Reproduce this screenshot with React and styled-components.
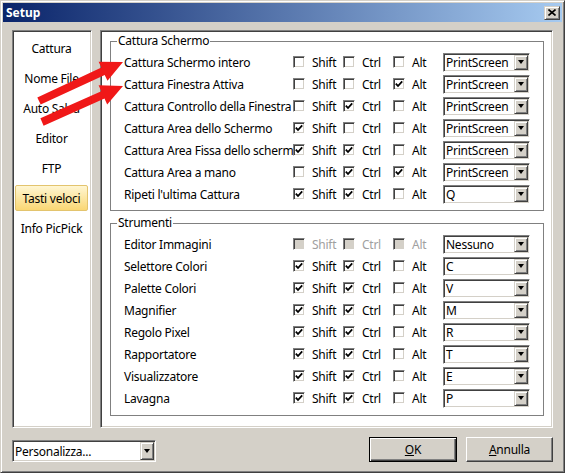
import React from "react";
import styled, { createGlobalStyle, css } from "styled-components";

const GlobalStyle = createGlobalStyle`
  html, body {
    margin: 0;
    padding: 0;
    background: #d4d0c8;
  }
  body {
    font-family: "Noto Sans", Tahoma, sans-serif;
    font-size: 12px;
    letter-spacing: -0.25px;
    color: #000;
  }
  * {
    box-sizing: border-box;
  }
`;

const sunken = css`
  border: 1px solid;
  border-color: #808080 #fff #fff #808080;
  box-shadow: inset 1px 1px #404040, inset -1px -1px #d4d0c8;
`;

const raised = css`
  border: 1px solid;
  border-color: #d4d0c8 #404040 #404040 #d4d0c8;
  box-shadow: inset 1px 1px #fff, inset -1px -1px #808080;
`;

const Window = styled.div`
  position: relative;
  width: 565px;
  height: 473px;
  background: #d4d0c8;
  border: 1px solid;
  border-color: #d4d0c8 #404040 #404040 #d4d0c8;
  box-shadow: inset 1px 1px #fff, inset -1px -1px #808080;
  padding: 2px;
  display: flex;
  flex-direction: column;
`;

const TitleBar = styled.div`
  flex: none;
  height: 19px;
  display: flex;
  align-items: center;
  justify-content: space-between;
  padding: 0 2px 0 3px;
  background: linear-gradient(to right, #0a246a, #a6caf0);
`;

const Title = styled.span`
  color: #fff;
  font-weight: bold;
  font-size: 12px;
  letter-spacing: 0;
`;

const CloseButton = styled.div`
  width: 16px;
  height: 14px;
  background: #d4d0c8;
  ${raised};
  display: flex;
  align-items: center;
  justify-content: center;
`;

const Body = styled.div`
  flex: none;
  display: grid;
  grid-template-columns: 80px 453px;
  column-gap: 8px;
  padding: 8px 9px 0;
  height: 406px;
`;

const NavList = styled.div`
  ${sunken};
  background: #fff;
  display: flex;
  flex-direction: column;
  gap: 4px;
  padding: 4px 3px 0 2px;
`;

const NavItem = styled.div`
  height: 26px;
  display: flex;
  align-items: center;
  justify-content: center;
  white-space: nowrap;
  border: 1px solid transparent;
  border-radius: 2px;
  ${(p) =>
    p.$active &&
    css`
      background: linear-gradient(#fff6d2, #fad774);
      border-color: #e3c46e;
    `}
`;

const MainPanel = styled.div`
  ${sunken};
  background: #fff;
  padding: 3px 8px 0 9px;
`;

const Group = styled.fieldset`
  margin: 0;
  min-width: 0;
  border: 1px solid #808080;
  padding: 3px 13px ${(p) => p.$bottom}px;

  & + & {
    margin-top: 5px;
  }
`;

const Legend = styled.legend`
  padding: 0 1px;
  margin-left: -7px;
  line-height: 14px;
`;

const Row = styled.div`
  display: grid;
  grid-template-columns: 169px 50px 50px 50px 87px;
  height: 22px;
  align-items: center;
`;

const Label = styled.span`
  white-space: nowrap;
  padding-top: 1px;
`;

const Check = styled.div`
  display: flex;
  align-items: center;
  gap: 7px;
  color: ${(p) => (p.$disabled ? "#a0a0a0" : "#000")};
`;

const Box = styled.span`
  flex: none;
  width: 12px;
  height: 12px;
  ${sunken};
  background: ${(p) => (p.$disabled ? "#d4d0c8" : "#fff")};
  display: flex;
  align-items: center;
  justify-content: center;
`;

const Combo = styled.div`
  width: ${(p) => p.$w}px;
  height: ${(p) => p.$h}px;
  ${sunken};
  background: #fff;
  display: flex;
  align-items: center;
  justify-content: space-between;
  padding: 0 1px 0 2px;
  white-space: nowrap;
`;

const ComboButton = styled.span`
  flex: none;
  width: 14px;
  height: ${(p) => p.$h}px;
  background: #d4d0c8;
  ${raised};
  display: flex;
  align-items: center;
  justify-content: center;
`;

const Triangle = styled.span`
  width: 0;
  height: 0;
  border-left: 3.5px solid transparent;
  border-right: 3.5px solid transparent;
  border-top: 4px solid #000;
`;

const Footer = styled.div`
  flex: none;
  display: flex;
  align-items: flex-end;
  gap: 9px;
  padding: 9px 9px 0 9px;
`;

const Spacer = styled.div`
  flex: 1;
`;

const Button = styled.div`
  width: ${(p) => p.$w}px;
  height: 25px;
  display: flex;
  align-items: center;
  justify-content: center;
  background: #d4d0c8;
  border: 1px solid;
  border-color: #fff #404040 #404040 #fff;
  box-shadow: inset -1px -1px #808080;
  ${(p) =>
    p.$default &&
    css`
      border-color: #000;
      box-shadow: inset 1px 1px #fff, inset -1px -1px #404040,
        inset -2px -2px #808080;
    `}
`;

const Mnemonic = styled.span`
  text-decoration: underline;
`;

const Overlay = styled.svg`
  position: absolute;
  top: -1px;
  left: -1px;
  pointer-events: none;
`;

const arrowPoints = ([x1, y1], [x2, y2], shaft = 4, head = 10.5, len = 22) => {
  const d = Math.hypot(x2 - x1, y2 - y1);
  const ux = (x2 - x1) / d;
  const uy = (y2 - y1) / d;
  const nx = -uy;
  const ny = ux;
  const bx = x2 - ux * len;
  const by = y2 - uy * len;
  return [
    [x1 + nx * shaft, y1 + ny * shaft],
    [bx + nx * shaft, by + ny * shaft],
    [bx + nx * head, by + ny * head],
    [x2, y2],
    [bx - nx * head, by - ny * head],
    [bx - nx * shaft, by - ny * shaft],
    [x1 - nx * shaft, y1 - ny * shaft],
  ]
    .map(([x, y]) => `${x.toFixed(1)},${y.toFixed(1)}`)
    .join(" ");
};

const navItems = [
  "Cattura",
  "Nome File",
  "Auto Salva",
  "Editor",
  "FTP",
  "Tasti veloci",
  "Info PicPick",
];

const captureRows = [
  ["Cattura Schermo intero", 0, 0, 0, "PrintScreen"],
  ["Cattura Finestra Attiva", 0, 0, 1, "PrintScreen"],
  ["Cattura Controllo della Finestra", 0, 1, 0, "PrintScreen"],
  ["Cattura Area dello Schermo", 1, 0, 0, "PrintScreen"],
  ["Cattura Area Fissa dello schermo", 1, 1, 0, "PrintScreen"],
  ["Cattura Area a mano", 0, 1, 1, "PrintScreen"],
  ["Ripeti l'ultima Cattura", 1, 1, 0, "Q"],
];

const toolRows = [
  ["Editor Immagini", 0, 0, 0, "Nessuno", true],
  ["Selettore Colori", 1, 1, 0, "C"],
  ["Palette Colori", 1, 1, 0, "V"],
  ["Magnifier", 1, 1, 0, "M"],
  ["Regolo Pixel", 1, 1, 0, "R"],
  ["Rapportatore", 1, 1, 0, "T"],
  ["Visualizzatore", 1, 1, 0, "E"],
  ["Lavagna", 1, 1, 0, "P"],
];

const CheckBox = ({ label, checked, disabled }) => (
  <Check $disabled={disabled}>
    <Box $disabled={disabled}>
      {checked ? (
        <svg width="8" height="8" viewBox="0 0 8 8">
          <polyline
            points="0.8,3.6 3,6 7.2,1.4"
            fill="none"
            stroke="#000"
            strokeWidth="1.8"
          />
        </svg>
      ) : null}
    </Box>
    {label}
  </Check>
);

const Dropdown = ({ value, width, height }) => (
  <Combo $w={width} $h={height}>
    {value}
    <ComboButton $h={height - 4}>
      <Triangle />
    </ComboButton>
  </Combo>
);

const HotkeyRow = ({ row }) => {
  const [label, shift, ctrl, alt, key, disabled] = row;
  return (
    <Row>
      <Label>{label}</Label>
      <CheckBox label="Shift" checked={shift} disabled={disabled} />
      <CheckBox label="Ctrl" checked={ctrl} disabled={disabled} />
      <CheckBox label="Alt" checked={alt} disabled={disabled} />
      <Dropdown value={key} width={87} height={19} />
    </Row>
  );
};

export default function App() {
  return (
    <>
      <GlobalStyle />
      <Window>
        <TitleBar>
          <Title>Setup</Title>
          <CloseButton>
            <svg width="8" height="7" viewBox="0 0 8 7">
              <path d="M0.5 0.5 L7.5 6.5 M7.5 0.5 L0.5 6.5" stroke="#000" strokeWidth="1.6" />
            </svg>
          </CloseButton>
        </TitleBar>

        <Body>
          <NavList>
            {navItems.map((item) => (
              <NavItem key={item} $active={item === "Tasti veloci"}>
                {item}
              </NavItem>
            ))}
          </NavList>

          <MainPanel>
            <Group $bottom={5}>
              <Legend>Cattura Schermo</Legend>
              {captureRows.map((row) => (
                <HotkeyRow key={row[0]} row={row} />
              ))}
            </Group>
            <Group $bottom={6}>
              <Legend>Strumenti</Legend>
              {toolRows.map((row) => (
                <HotkeyRow key={row[0]} row={row} />
              ))}
            </Group>
          </MainPanel>
        </Body>

        <Footer>
          <Dropdown value="Personalizza..." width={144} height={22} />
          <Spacer />
          <Button $w={88} $default>
            <Mnemonic>O</Mnemonic>K
          </Button>
          <Button $w={87}>
            <Mnemonic>A</Mnemonic>nnulla
          </Button>
        </Footer>

        <Overlay width="565" height="473">
          <polygon points={arrowPoints([39, 101], [123, 62])} fill="#f01818" />
          <polygon points={arrowPoints([42, 122], [123, 86])} fill="#f01818" />
        </Overlay>
      </Window>
    </>
  );
}
